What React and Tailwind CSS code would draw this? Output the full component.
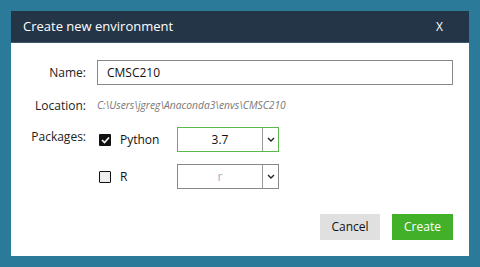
import React from "react";

const font = { fontFamily: '"Open Sans", "Noto Sans", sans-serif' };

function Chevron() {
  return (
    <svg width="8" height="5" viewBox="0 0 8 5" className="block">
      <path d="M1 1 L4 4 L7 1" fill="none" stroke="#222" strokeWidth="1.4" />
    </svg>
  );
}

function Select({ value, active, muted }) {
  return (
    <div
      className={`flex w-[102px] h-[25px] border ${active ? "border-[#5bb84a]" : "border-[#888888]"}`}
    >
      <div className={`flex-1 flex items-center justify-center text-[12px] ${muted ? "text-[#9ab0c8]" : "text-[#111]"}`}>
        {value}
      </div>
      <div className="w-[16px] border-l border-[#9a9a9a] flex items-center justify-center">
        <Chevron />
      </div>
    </div>
  );
}

export default function App() {
  return (
    <div className="w-[480px] h-[267px] bg-[#2c7a9a] pt-[11px] pl-[11px]" style={font}>
      <div className="w-[458px] h-[245px] bg-white flex flex-col">
        <div className="h-[32px] bg-[#243547] border-b border-[#3f5a70] flex items-center justify-between pl-[12px] pr-[26px] text-white text-[13px]">
          <span>Create new environment</span>
          <span className="text-[12px]">X</span>
        </div>
        <div className="flex flex-col pt-[17px]">
          <div className="flex items-center h-[25px]">
            <div className="w-[75px] text-right text-[12px] text-[#222]">Name:</div>
            <div className="ml-[11px] w-[356px] h-[25px] border border-[#888888] flex items-center pl-[9px] text-[12px] text-[#111]">
              CMSC210
            </div>
          </div>
          <div className="flex items-center h-[20px] mt-[11px]">
            <div className="w-[75px] text-right text-[12px] text-[#222]">Location:</div>
            <div className="ml-[11px] text-[10.3px] italic text-[#777]">
              C:\Users\jgreg\Anaconda3\envs\CMSC210
            </div>
          </div>
          <div className="flex items-center h-[25px] mt-[11px]">
            <div className="w-[75px] text-right text-[12px] text-[#222] -mt-[5px]">Packages:</div>
            <div className="ml-[13px] w-[12px] h-[12px] bg-[#111] rounded-[1px] flex items-center justify-center">
              <svg width="9" height="8" viewBox="0 0 9 8">
                <path d="M1 4 L3.5 6.5 L8 1.5" fill="none" stroke="white" strokeWidth="1.6" />
              </svg>
            </div>
            <div className="ml-[9px] w-[57px] text-[12px] text-[#111]">Python</div>
            <Select value="3.7" active />
          </div>
          <div className="flex items-center h-[25px] mt-[12px]">
            <div className="w-[75px]" />
            <div className="ml-[13px] w-[12px] h-[12px] border-[1.5px] border-[#111] rounded-[1px] bg-[#eee]" />
            <div className="ml-[9px] w-[57px] text-[12px] text-[#111]">R</div>
            <Select value="r" muted />
          </div>
          <div className="flex justify-end gap-[12px] mt-[25px] pr-[16px]">
            <div className="w-[60px] h-[26px] bg-[#e0e0e0] flex items-center justify-center text-[12px] text-[#111]">
              Cancel
            </div>
            <div className="w-[61px] h-[26px] bg-[#43b02a] flex items-center justify-center text-[12px] text-white">
              Create
            </div>
          </div>
        </div>
      </div>
    </div>
  );
}
